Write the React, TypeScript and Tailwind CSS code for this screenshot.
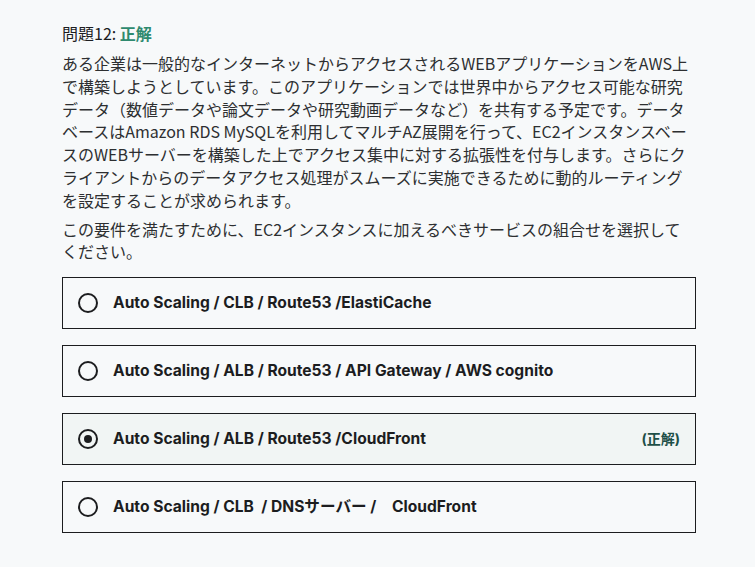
import React from "react";

const jp = { fontFamily: '"Noto Sans CJK JP", "Noto Sans", sans-serif' };
const opt = { fontFamily: 'Inter, "Noto Sans CJK JP", sans-serif' };

const lines1 = [
  "ある企業は一般的なインターネットからアクセスされるWEBアプリケーションをAWS上",
  "で構築しようとしています。このアプリケーションでは世界中からアクセス可能な研究",
  "データ（数値データや論文データや研究動画データなど）を共有する予定です。データ",
  "ベースはAmazon RDS MySQLを利用してマルチAZ展開を行って、EC2インスタンスベー",
  "スのWEBサーバーを構築した上でアクセス集中に対する拡張性を付与します。さらにク",
  "ライアントからのデータアクセス処理がスムーズに実施できるために動的ルーティング",
  "を設定することが求められます。",
];

const lines2 = [
  "この要件を満たすために、EC2インスタンスに加えるべきサービスの組合せを選択して",
  "ください。",
];

const options = [
  { text: "Auto Scaling / CLB / Route53 /ElastiCache", selected: false, correct: false },
  { text: "Auto Scaling / ALB / Route53 / API Gateway / AWS cognito", selected: false, correct: false },
  { text: "Auto Scaling / ALB / Route53 /CloudFront", selected: true, correct: true },
  { text: "Auto Scaling / CLB  / DNSサーバー /　CloudFront", selected: false, correct: false },
];

function Radio({ checked }: { checked: boolean }) {
  return (
    <span className="flex h-[20px] w-[20px] shrink-0 items-center justify-center rounded-full border-2 border-[#1c1d1f]">
      {checked && <span className="h-[8px] w-[8px] rounded-full bg-[#1c1d1f]" />}
    </span>
  );
}

export default function App() {
  return (
    <div className="min-h-[567px] w-[755px] bg-[#f7f9fa] text-[#1c1d1f]">
      <div className="w-[634px] pl-[62px] pt-[22px] box-content">
        <div className="text-[16px] leading-[22px]" style={jp}>
          問題12: <span className="font-bold text-[#2e8a6f]">正解</span>
        </div>
        <div className="mt-[8px] text-[16px] leading-[22.8px] text-[#2d2f31]" style={jp}>
          {lines1.map((l, i) => (
            <div key={i} className="whitespace-nowrap">{l}</div>
          ))}
        </div>
        <div className="mt-[6px] text-[16px] leading-[22.5px] text-[#2d2f31]" style={jp}>
          {lines2.map((l, i) => (
            <div key={i} className="whitespace-nowrap">{l}</div>
          ))}
        </div>
        <div className="mt-[14px] flex flex-col gap-[16px]">
          {options.map((o, i) => (
            <div
              key={i}
              className={`flex h-[52px] items-center border border-[#1c1d1f] pl-[15px] pr-[15px] ${
                o.selected ? "bg-[#f1f5f4]" : "bg-[#f7f9fa]"
              }`}
            >
              <Radio checked={o.selected} />
              <span className="ml-[15px] flex-1 whitespace-pre text-[15.6px] font-bold" style={opt}>
                {o.text}
              </span>
              {o.correct && (
                <span className="text-[14px] font-bold text-[#1e4f47]" style={opt}>
                  (正解)
                </span>
              )}
            </div>
          ))}
        </div>
      </div>
    </div>
  );
}
